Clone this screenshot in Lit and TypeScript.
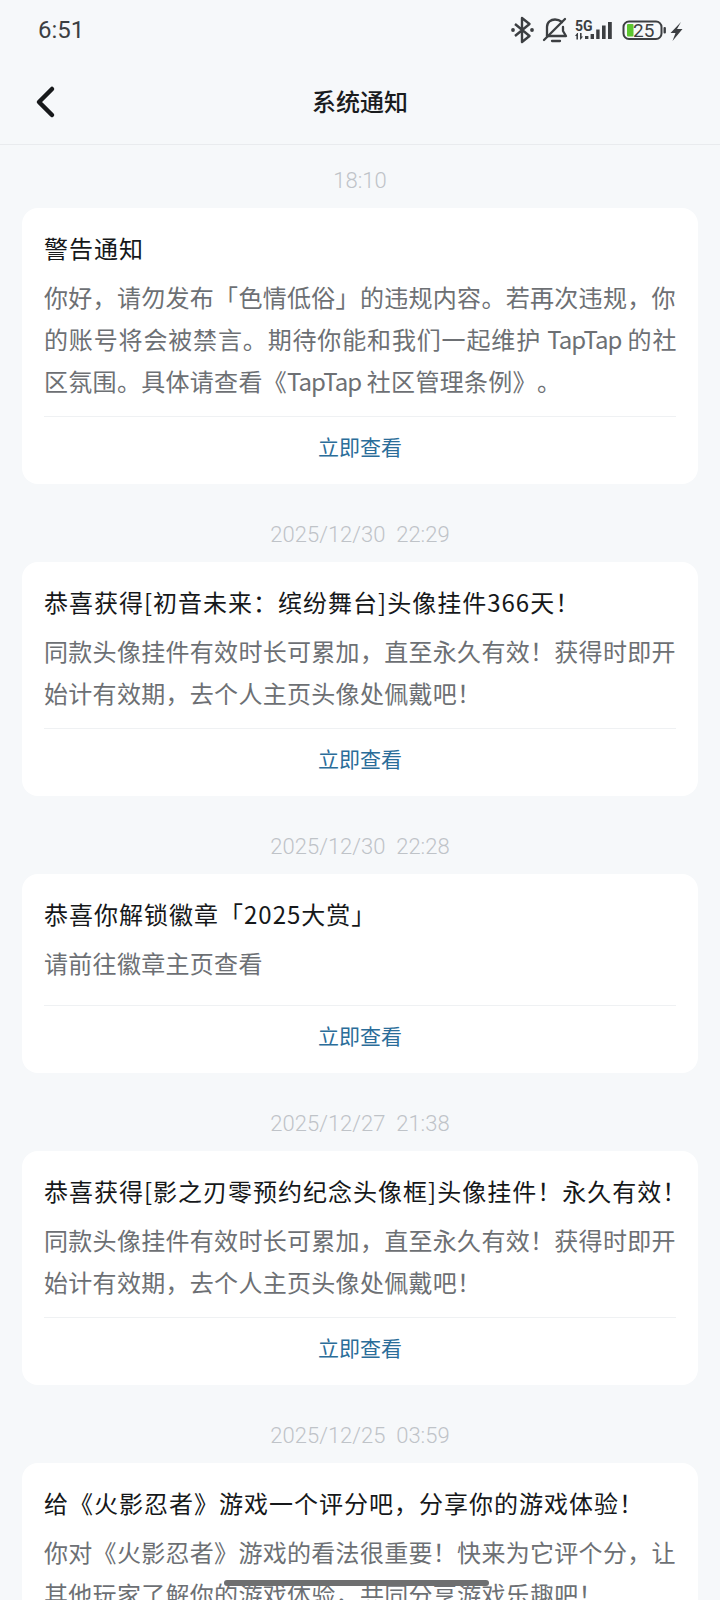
import { LitElement, html, css, svg, TemplateResult } from "lit";
import { customElement } from "lit/decorators.js";

interface Notice {
  time: string;
  title: string;
  lines: (string | TemplateResult)[];
}

const NOTICES: Notice[] = [
  {
    time: "18:10",
    title: "警告通知",
    lines: [
      "你好，请勿发布「色情低俗」的违规内容。若再次违规，你",
      html`<span class="wide">的账号将会被禁言。期待你能和我们一起维护 <span class="latin">TapTap</span> 的社</span>`,
      html`区氛围。具体请查看《<span class="latin">TapTap</span> 社区管理条例》。`,
    ],
  },
  {
    time: "2025/12/30  22:29",
    title: "恭喜获得[初音未来：缤纷舞台]头像挂件366天！",
    lines: [
      "同款头像挂件有效时长可累加，直至永久有效！获得时即开",
      "始计有效期，去个人主页头像处佩戴吧！",
    ],
  },
  {
    time: "2025/12/30  22:28",
    title: "恭喜你解锁徽章「2025大赏」",
    lines: ["请前往徽章主页查看"],
  },
  {
    time: "2025/12/27  21:38",
    title: "恭喜获得[影之刃零预约纪念头像框]头像挂件！永久有效！",
    lines: [
      "同款头像挂件有效时长可累加，直至永久有效！获得时即开",
      "始计有效期，去个人主页头像处佩戴吧！",
    ],
  },
  {
    time: "2025/12/25  03:59",
    title: "给《火影忍者》游戏一个评分吧，分享你的游戏体验！",
    lines: [
      "你对《火影忍者》游戏的看法很重要！快来为它评个分，让",
      "其他玩家了解你的游戏体验，共同分享游戏乐趣吧！",
    ],
  },
];

// svg coordinates are screen x - 480, screen y
const statusIcons = svg`
  <path d="M35 24 L49.5 36 L42 42 V18 L49.5 24 L35 36" fill="none" stroke="#3c3f42" stroke-width="2.4" stroke-linejoin="round"/>
  <circle cx="33" cy="30" r="1.9" fill="#3c3f42"/>
  <circle cx="52" cy="30" r="1.9" fill="#3c3f42"/>
  <g fill="none" stroke="#3c3f42" stroke-width="2.3" stroke-linecap="round" stroke-linejoin="round">
    <path d="M67 36 V27 C67 22 71 19.5 75 19.5 C78 19.5 80 20.5 82 22"/>
    <path d="M83 27 V31 L86 36 H67"/>
    <path d="M72 41 H80"/>
    <path d="M64 40 L85 19"/>
  </g>
  <g fill="#3c3f42">
    <rect x="105" y="36" width="3.4" height="3"/>
    <rect x="110.6" y="34" width="3.4" height="5"/>
    <rect x="116.2" y="29.5" width="3.4" height="9.5"/>
    <rect x="122" y="25.5" width="3.6" height="13.5"/>
    <rect x="128" y="22" width="3.8" height="17"/>
    <path d="M97.2 33 L95 36 H96.4 V39.5 H98 V33 Z"/>
    <path d="M100 33 H101.6 V36.5 H103 L100.8 39.5 H100 Z"/>
  </g>
  <rect x="143.5" y="21.5" width="38" height="17.5" rx="5.5" fill="none" stroke="#3c3f42" stroke-width="2"/>
  <rect x="147" y="24" width="6.5" height="12.5" rx="1" fill="#5cc62f"/>
  <rect x="183.5" y="27" width="2.4" height="6.5" rx="1" fill="#3c3f42"/>
  <path d="M201 22 L190.5 33 H195.5 L192.5 41 L202.5 29 H197 Z" fill="#3c3f42"/>
`;

@customElement("app-root")
export class AppRoot extends LitElement {
  static styles = css`
    :host {
      display: block;
      position: relative;
      height: 1600px;
      overflow: hidden;
      background: #f6f8fa;
      font-family: "Noto Sans CJK SC", "Noto Sans", sans-serif;
      text-spacing-trim: space-all;
    }
    .status {
      height: 60px;
      display: flex;
      align-items: center;
      justify-content: space-between;
      padding: 0 38px;
      box-sizing: border-box;
    }
    .clock {
      font-family: Roboto, sans-serif;
      font-size: 24px;
      color: #3c3f42;
    }
    .status-icons {
      display: block;
      width: 204px;
      height: 60px;
      margin-right: -2px;
    }
    .status-icons text {
      font-family: Roboto, sans-serif;
    }
    .nav {
      height: 80px;
      padding-bottom: 4px;
      display: flex;
      align-items: center;
      justify-content: center;
      position: relative;
      border-bottom: 1px solid #e9ebee;
    }
    .back {
      position: absolute;
      left: 34px;
      top: 24px;
      width: 24px;
      height: 36px;
    }
    .nav-title {
      font-size: 24px;
      font-weight: 500;
      color: #1a1c1e;
    }
    .list {
      padding: 0 22px;
    }
    .time {
      height: 78px;
      padding-top: 22px;
      box-sizing: border-box;
      display: flex;
      align-items: center;
      justify-content: center;
      white-space: pre;
      font-family: Roboto, sans-serif;
      font-size: 22px;
      font-weight: 300;
      color: #bfc3c8;
    }
    .time.first {
      height: 63px;
      padding-top: 7px;
    }
    .card {
      background: #fff;
      border-radius: 16px;
      padding: 22px 22px 0;
    }
    .title {
      font-size: 24px;
      line-height: 36px;
      letter-spacing: 1px;
      color: #16181a;
      white-space: nowrap;
    }
    .body {
      margin-top: 10px;
      font-size: 24px;
      line-height: 42px;
      letter-spacing: 0.3px;
      color: #6d7074;
      white-space: nowrap;
    }
    .body.single {
      padding-bottom: 7px;
    }
    .wide {
      letter-spacing: 0.85px;
    }
    .latin {
      letter-spacing: -1px;
    }
    .action {
      margin-top: 14px;
      height: 68px;
      border-top: 1px solid #eff1f3;
      display: flex;
      align-items: center;
      justify-content: center;
      padding-bottom: 10px;
      box-sizing: border-box;
      font-size: 21px;
      color: #2b6d99;
    }
    .home {
      position: absolute;
      left: 224px;
      top: 1580px;
      width: 265px;
      height: 6px;
      border-radius: 3px;
      background: #6e6f70;
    }
  `;

  render() {
    return html`
      <div class="status">
        <span class="clock">6:51</span>
        <svg class="status-icons" viewBox="0 0 204 60">
          ${statusIcons}
          <text x="95" y="31" font-size="14" font-weight="700" fill="#3c3f42">5G</text>
          <text x="153" y="36.5" font-size="19" fill="#3c3f42">25</text>
        </svg>
      </div>
      <div class="nav">
        <svg class="back" viewBox="0 0 24 36">
          <path d="M18 5 L5 18 L18 31" fill="none" stroke="#17191b" stroke-width="4.5" stroke-linecap="round" stroke-linejoin="round"/>
        </svg>
        <span class="nav-title">系统通知</span>
      </div>
      <div class="list">
        ${NOTICES.map(
          (n, i) => html`
            <div class="time ${i === 0 ? "first" : ""}">${n.time}</div>
            <div class="card">
              <div class="title">${n.title}</div>
              <div class="body ${n.lines.length === 1 ? "single" : ""}">
                ${n.lines.map((l) => html`<div>${l}</div>`)}
              </div>
              <div class="action">立即查看</div>
            </div>
          `
        )}
      </div>
      <div class="home"></div>
    `;
  }
}
